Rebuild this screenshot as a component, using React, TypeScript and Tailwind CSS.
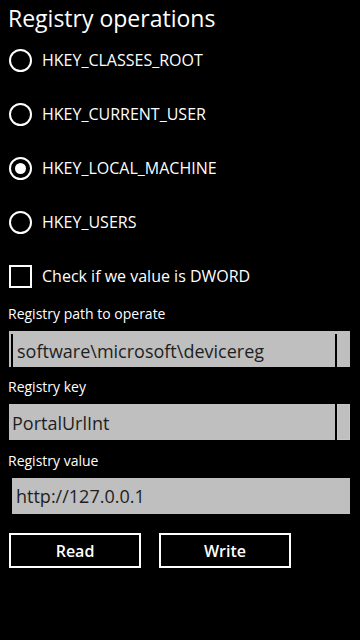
import React, { useState } from "react";

const KEYS = [
  "HKEY_CLASSES_ROOT",
  "HKEY_CURRENT_USER",
  "HKEY_LOCAL_MACHINE",
  "HKEY_USERS",
];

function Radio({ checked }: { checked: boolean }) {
  return (
    <div className="w-[23px] h-[23px] rounded-full border-[2px] border-white flex items-center justify-center">
      {checked && <div className="w-[11px] h-[11px] rounded-full bg-white" />}
    </div>
  );
}

export default function App() {
  const [hive, setHive] = useState(2);
  const [dword, setDword] = useState(false);

  return (
    <div
      className="w-[360px] h-[640px] bg-black text-white overflow-hidden"
      style={{ fontFamily: '"Open Sans", "Noto Sans", sans-serif' }}
    >
      <h1 className="pl-[8px] pt-[2px] h-[33px] text-[23px] leading-[32px] font-normal">
        Registry operations
      </h1>

      <div className="flex flex-col">
        {KEYS.map((k, i) => (
          <button
            key={k}
            type="button"
            onClick={() => setHive(i)}
            className="h-[54px] flex items-center pl-[9px] gap-[10px] text-left"
          >
            <Radio checked={hive === i} />
            <span className="text-[16px] leading-none">{k}</span>
          </button>
        ))}

        <button
          type="button"
          onClick={() => setDword(!dword)}
          className="h-[54px] flex items-center pl-[9px] gap-[10px] text-left"
        >
          <div className="w-[23px] h-[23px] border-[2px] border-white flex items-center justify-center text-[14px]">
            {dword ? "✓" : ""}
          </div>
          <span className="text-[16px] leading-none">Check if we value is DWORD</span>
        </button>
      </div>

      <div className="pl-[8px] pt-[1px] h-[28px] text-[14px] leading-[20px]">
        Registry path to operate
      </div>
      {/* path box */}
      <div className="ml-[9px] w-[341px] h-[36px] bg-[#bfbfbf] pt-[3px] flex">
        <div className="ml-[2px] w-[2px] bg-black" />
        <div className="w-[322px] pl-[4px] pt-[2px] text-[#1e1e1e] text-[18px] leading-[30px] whitespace-nowrap overflow-hidden">
          software\microsoft\devicereg
        </div>
        <div className="w-[2px] bg-black" />
      </div>

      <div className="pl-[8px] pt-[10px] h-[37px] text-[14px] leading-[20px]">
        Registry key
      </div>
      {/* key box */}
      <div className="ml-[9px] h-[36px] flex">
        <div className="w-[326px] bg-[#bfbfbf] pl-[3px] pt-[3px] text-[#1e1e1e] text-[18px] leading-[33px]">
          PortalUrlInt
        </div>
        <div className="w-[2px]" />
        <div className="w-[13px] bg-[#bfbfbf] border border-[#c8c8c8]" />
      </div>

      <div className="pl-[8px] pt-[11px] h-[38px] text-[14px] leading-[20px]">
        Registry value
      </div>
      {/* value box */}
      <div className="ml-[10px] h-[36px] flex">
        <div className="w-[2px] bg-black" />
        <div className="w-[338px] bg-[#bfbfbf] pl-[4px] pt-[1px] text-[#1e1e1e] text-[18px] leading-[35px]">
          http://127.0.0.1
        </div>
      </div>

      <div className="flex gap-[18px] pl-[9px] pt-[19px]">
        <button
          type="button"
          className="w-[132px] h-[35px] border-[2px] border-white text-[16px] font-semibold leading-none pt-[1px]"
        >
          Read
        </button>
        <button
          type="button"
          className="w-[132px] h-[35px] border-[2px] border-white text-[16px] font-semibold leading-none pt-[1px]"
        >
          Write
        </button>
      </div>
    </div>
  );
}
